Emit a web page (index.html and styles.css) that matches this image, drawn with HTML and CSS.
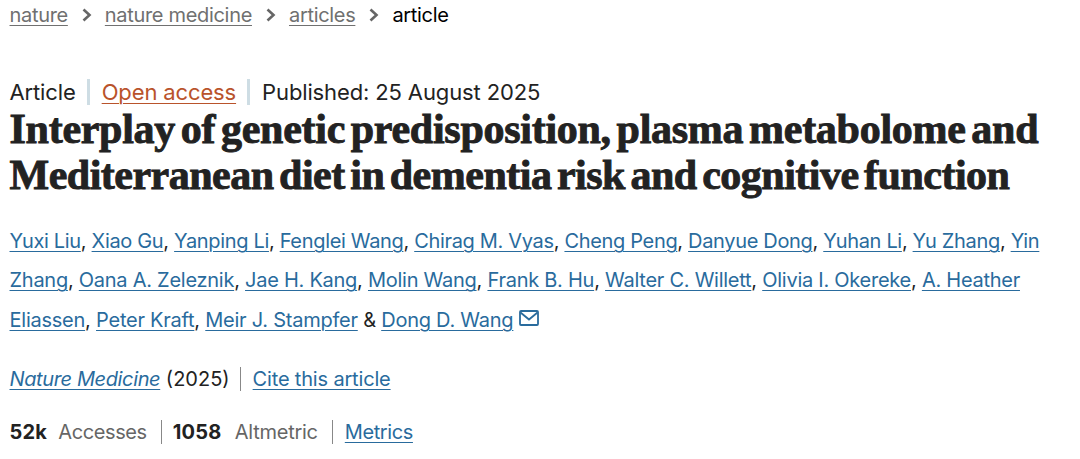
FILE: index.html
```html
<!DOCTYPE html>
<html lang="en">
<head>
    <meta charset="UTF-8">
    <meta name="viewport" content="width=device-width, initial-scale=1.0">
    <title>Interplay of genetic predisposition | Nature Medicine</title>
    <link rel="stylesheet" href="styles.css">
</head>
<body>
    <nav class="breadcrumbs">
        <a href="#">nature</a>
        <svg class="chevron" viewBox="0 0 10 14"><path d="M1.500 1.500L7.500 7l-6 5.500"/></svg>
        <a href="#">nature medicine</a>
        <svg class="chevron" viewBox="0 0 10 14"><path d="M1.500 1.500L7.500 7l-6 5.500"/></svg>
        <a href="#">articles</a>
        <svg class="chevron" viewBox="0 0 10 14"><path d="M1.500 1.500L7.500 7l-6 5.500"/></svg>
        <span class="current">article</span>
    </nav>
    <header>
        <ul class="identifiers">
            <li>Article</li>
            <li><a class="open-access" href="#">Open access</a></li>
            <li>Published: 25 August 2025</li>
        </ul>
        <h1><span class="title-first">Interplay of genetic predisposition, plasma metabolome and</span><br><span class="title-second">Mediterranean diet in dementia risk and cognitive function</span></h1>
        <p class="authors">
            <span class="row-one"><a href="#">Yuxi Liu</a>, <a href="#">Xiao Gu</a>, <a href="#">Yanping Li</a>, <a href="#">Fenglei Wang</a>, <a href="#">Chirag M. Vyas</a>, <a href="#">Cheng Peng</a>, <a href="#">Danyue Dong</a>, <a href="#">Yuhan Li</a>, <a href="#">Yu Zhang</a>, <a href="#">Yin</a></span><br>
            <span class="row-two"><a href="#">Zhang</a>, <a href="#">Oana A. Zeleznik</a>, <a href="#">Jae H. Kang</a>, <a href="#">Molin Wang</a>, <a href="#">Frank B. Hu</a>, <a href="#">Walter C. Willett</a>, <a href="#">Olivia I. Okereke</a>, <a href="#">A. Heather</a></span><br>
            <span class="row-three"><a href="#">Eliassen</a>, <a href="#">Peter Kraft</a>, <a href="#">Meir J. Stampfer</a> &amp; <a href="#">Dong D. Wang</a></span>
            <svg class="mail" viewBox="0 0 20 16"><rect x="1" y="1" width="18" height="14" rx="1"/><path d="M1.500 2.500L10 9.500l8.500-7"/></svg>
        </p>
        <p class="info"><span><a class="journal" href="#">Nature Medicine</a> (2025)</span><a class="cite" href="#">Cite this article</a></p>
        <ul class="metrics">
            <li><b>52k</b> <span>Accesses</span></li>
            <li><b>1058</b> <span>Altmetric</span></li>
            <li><a href="#">Metrics</a></li>
        </ul>
    </header>
</body>
</html>
```
FILE: styles.css
```css
body {
    margin: 0;
    padding: 0 9.5px;
    background: #fff;
    color: #222;
    font-family: Inter, sans-serif;
    font-size: 20px;
}
a {
    color: #296b9d;
    text-decoration: underline;
    text-decoration-thickness: 1px;
    text-underline-offset: 3px;
}
ul {
    display: flex;
    margin: 0;
    padding: 0;
    list-style: none;
}
.breadcrumbs {
    display: flex;
    align-items: center;
    height: 30px;
    letter-spacing: -0.32px;
}
.breadcrumbs a {
    color: #707070;
}
.current {
    color: #000;
}
.chevron {
    width: 10px;
    height: 14px;
    margin: 0 13px 0 14px;
    fill: none;
    stroke: #666;
    stroke-width: 2.6;
}
.identifiers {
    align-items: center;
    height: 28px;
    padding-top: 48px;
    font-size: 22px;
    letter-spacing: -0.13px;
}
.identifiers li + li {
    border-left: 3px solid #cedde4;
    margin-left: 11px;
    padding-left: 12px;
}
.identifiers .open-access {
    color: #b9532b;
}
h1 {
    margin: 0;
    font-family: "Liberation Serif", serif;
    font-size: 42px;
    line-height: 46px;
    white-space: nowrap;
    word-spacing: -4.5px;
    -webkit-text-stroke: 0.9px #222;
}
.title-first {
    letter-spacing: -0.27px;
}
.title-second {
    letter-spacing: -0.5px;
}
.authors {
    margin: 24px 0 0;
    line-height: 39.3px;
    white-space: nowrap;
}
.row-one {
    letter-spacing: -0.33px;
}
.row-two {
    letter-spacing: -0.26px;
}
.row-three {
    letter-spacing: -0.24px;
}
.mail {
    width: 20px;
    height: 16px;
    margin-bottom: 1px;
    fill: none;
    stroke: #296b9d;
    stroke-width: 1.8;
}
.info {
    display: flex;
    margin: 27px 0 0;
    line-height: 24px;
}
.journal {
    font-style: italic;
    letter-spacing: -0.38px;
}
.cite {
    border-left: 1px solid #888;
    margin-left: 10px;
    padding-left: 12px;
    letter-spacing: -0.17px;
}
.metrics {
    margin-top: 29px;
    line-height: 24px;
    letter-spacing: -0.4px;
}
.metrics b {
    letter-spacing: 0.2px;
}
.metrics li + li {
    border-left: 1px solid #888;
    margin-left: 14px;
    padding-left: 11px;
}
.metrics li:last-child {
    padding-left: 12px;
}
.metrics span {
    color: #666;
    margin-left: 6px;
}
.metrics li:nth-child(2) span {
    margin-left: 8px;
    letter-spacing: -0.25px;
}
```
